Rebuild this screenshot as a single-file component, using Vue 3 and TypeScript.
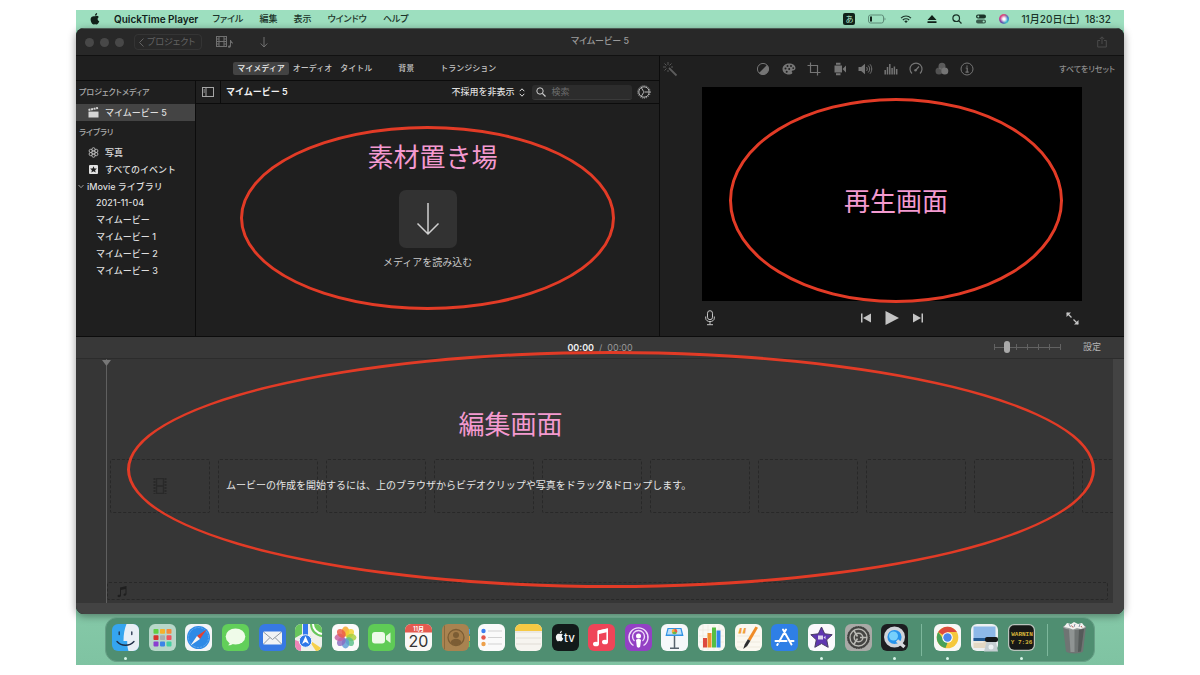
<script setup lang="ts">
import { ref } from 'vue'

interface Tab { name: string; wide?: boolean }
interface DockItem { name: string; art: string; running?: boolean }

const menus: string[] = ['ファイル', '編集', '表示', 'ウインドウ', 'ヘルプ']
const tabs: Tab[] = [
  { name: 'マイメディア' },
  { name: 'オーディオ' },
  { name: 'タイトル' },
  { name: '背景', wide: true },
  { name: 'トランジション' },
]
const activeTab = ref('マイメディア')
const events: string[] = ['2021-11-04', 'マイムービー', 'マイムービー 1', 'マイムービー 2', 'マイムービー 3']
const query = ref('')
const zoomLevel = ref(17)

const adjustments: { name: string; art: string }[] = [
  { name: 'カラーバランス', art: '<circle cx="7" cy="7" r="5.6" fill="none" stroke="currentColor"/><path fill="currentColor" d="M11 3a5.6 5.6 0 0 1-8 8z"/>' },
  { name: '色補正', art: '<path fill="currentColor" fill-rule="evenodd" d="M7 1.5c4 0 6.5 2 6.5 4.6 0 1.6-1 2.4-2.5 2.4-1.4 0-1.5 1-.8 1.7.7 1-.5 2.3-3 2.3C3 12.5.5 10 .5 7S3 1.5 7 1.5zM3.500 5.5a1 1 0 1 0 0 2 1 1 0 0 0 0-2zm2-2.5a1 1 0 1 0 0 2 1 1 0 0 0 0-2zm3.500 0a1 1 0 1 0 0 2 1 1 0 0 0 0-2zM4.700 8.700a1 1 0 1 0 0 2 1 1 0 0 0 0-2zm2.500-2.700a1 1 0 1 0 0 2 1 1 0 0 0 0-2zm4-.8a.9.9 0 1 0 0 1.800.9.9 0 0 0 0-1.800z"/>' },
  { name: 'クロップ', art: '<path fill="none" stroke="currentColor" stroke-width="1.2" d="M3.5.5v10h10M.5 3.5h10v10"/>' },
  { name: '手ぶれ補正', art: '<path fill="currentColor" d="M1.5 3.500h7.500v7H1.500zM9.500 7l3.500-3.500v7zM3 .8h4.500v1.900H3zM3 11.300h4.500v1.900H3z"/>' },
  { name: 'ボリューム', art: '<path fill="currentColor" d="M.5 5h2.600L7 1.800v10.400L3.100 9H.5z"/><path fill="none" stroke="currentColor" d="M8.500 5c1 1 1 3 0 4M10.200 3.500c2 2 2 5 0 7M12 2.300c2.300 2.700 2.300 6.700 0 9.400"/>' },
  { name: 'イコライザ', art: '<path fill="none" stroke="currentColor" stroke-width="1.5" d="M1.2 8v4.500M3.500 5v7.500M5.800 2v10.500M8.100 6v6.500M10.400 4.500v8M12.700 7v5.500"/>' },
  { name: '速度', art: '<path fill="none" stroke="currentColor" stroke-width="1.2" d="M3 11.500A6 6 0 1 1 11 11.500M6.500 8.500L10 4.500"/><circle cx="6.500" cy="8.300" r="1.200" fill="currentColor"/>' },
  { name: 'フィルタ', art: '<circle cx="7" cy="4.300" r="3.500" fill="currentColor" opacity=".7"/><circle cx="4" cy="9" r="3.500" fill="currentColor" opacity=".6"/><circle cx="9.800" cy="9" r="3.500" fill="currentColor"/>' },
  { name: '情報', art: '<circle cx="7" cy="7" r="6" fill="none" stroke="currentColor"/><path fill="none" stroke="currentColor" stroke-width="1.2" d="M5.700 6h1.500v4M5.500 10.200h3.200M7 3.400v1.300"/>' },
]

const petals = ['#f5a623', '#f2d22e', '#a6ce39', '#5bbf8a', '#5b9bd5', '#8a6bc1', '#c55fa0', '#ea5a47']
  .map((c, i) => `<ellipse cx="13.5" cy="7.600" rx="3.700" ry="5" fill="${c}" opacity=".82" transform="rotate(${i * 45} 13.5 13.5)"/>`)
  .join('')
const padColors = ['#5fce45', '#f4b12d', '#f58b3c', '#d8332d', '#a8adb0', '#f0525f', '#8b3fd0', '#3b84e8', '#43cfa0']
const padArt = padColors
  .map((c, i) => `<rect x="${4.5 + (i % 3) * 6.5}" y="${5 + Math.floor(i / 3) * 6.3}" width="5" height="4.800" rx=".8" fill="${c}"/>`)
  .join('')
const tile = (fill: string) => `<rect width="27" height="27" rx="6" fill="${fill}"/>`

const apps: DockItem[] = [
  { name: 'Finder', running: true, art: tile('#35a5ef') + '<path fill="#e9eff6" d="M14.500 0H21a6 6 0 0 1 6 6v15a6 6 0 0 1-6 6h-4.500c-1-3-1.300-6-1.300-10H11.500C11.500 10 12.500 5 14.500 0z"/><path d="M7.200 8v2.600M19.800 8v2.600M5 17.500c4.500 5 12.500 5 17 0" fill="none" stroke="#1d2c45" stroke-width="1.300" stroke-linecap="round"/>' },
  { name: 'Launchpad', art: tile('#b7d7c9') + padArt },
  { name: 'Safari', art: tile('#f3f5f6') + '<circle cx="13.500" cy="13.500" r="11.500" fill="#2e8ae6"/><circle cx="13.500" cy="13.500" r="10" fill="none" stroke="#9bccf7" stroke-width="1" stroke-dasharray=".5 1"/><path fill="#e6402f" d="M21.500 5.500l-6.500 9.500-3-3z"/><path fill="#f6f6f6" d="M5.500 21.500l6.500-9.500 3 3z"/>' },
  { name: 'メッセージ', art: tile('#62cf5a') + '<ellipse cx="13.500" cy="12.500" rx="9.800" ry="8" fill="#effbe9"/><path fill="#effbe9" d="M8 17c.2 2-.7 3.500-2 4.300 2.500.2 4.500-.8 5.500-2.300z"/>' },
  { name: 'メール', art: tile('#3779e4') + '<rect x="4" y="7.500" width="19" height="13" rx="1.500" fill="#f1f3f5"/><path fill="none" stroke="#9199a2" d="M4.500 8l9 7.500 9-7.500M4.500 20l6.500-6.500M22.500 20L16 13.500"/>' },
  { name: 'マップ', art: tile('#eff0eb') + '<path fill="#68c65c" d="M15 0h6a6 6 0 0 1 6 6v7C20 12 15 7 15 0zM0 6a6 6 0 0 1 6-6h1v10L0 14z"/><path fill="#3478ed" d="M8 0h5v13H8z"/><path fill="none" stroke="#fff" stroke-width="2" d="M18 0c0 5 4 9 9 10"/><path fill="#ef86b8" d="M0 16l6 2v9a6 6 0 0 1-6-6z"/><path fill="#f5d04b" d="M13 15l13 9c-1 2-3 3-5 3z"/><circle cx="10.500" cy="17" r="6.300" fill="#2f78e8" stroke="#f4f7fa"/><path fill="#fff" d="M10.500 12l3.500 8-3.500-2-3.500 2z"/>' },
  { name: '写真', art: tile('#fbfbfa') + petals },
  { name: 'FaceTime', art: tile('#5fcb56') + '<rect x="4" y="8" width="13" height="11.500" rx="3" fill="#eefaea"/><path fill="#e4f6e0" d="M18 12l4.500-3.500v10.500L18 15.500z"/>' },
  { name: 'カレンダー', art: tile('#f9f8f6') + '<path fill="#e45a4f" d="M0 8.500V6a6 6 0 0 1 6-6h15a6 6 0 0 1 6 6v2.500z"/><text x="13.500" y="6.500" font-size="6" font-weight="600" text-anchor="middle" fill="#fff">11月</text><text x="13.500" y="22.500" font-size="16" text-anchor="middle" fill="#333">20</text>' },
  { name: '連絡先', art: '<path fill="#4b9be0" d="M24 5h4v5h-4z"/><path fill="#e8a33b" d="M24 12h4v5h-4z"/><path fill="#58c06a" d="M24 18h4v5h-4z"/>' + tile('#a98350') + '<path stroke="#8a6a3d" d="M2.500 1.500v24"/><circle cx="14" cy="13.500" r="8" fill="#a47d4a" stroke="#7c5d34" stroke-width="1.300"/><circle cx="14" cy="11" r="3" fill="#7c5d34"/><path fill="#7c5d34" d="M8.500 18.500c1-5 10-5 11 0-3 3.500-8 3.500-11 0z"/>' },
  { name: 'リマインダー', art: tile('#fafafa') + '<circle cx="5.500" cy="7" r="2.200" fill="#3c7ff0"/><circle cx="5.500" cy="13.500" r="2.200" fill="#e4564b"/><circle cx="5.500" cy="20" r="2.200" fill="#eda04a"/><path stroke="#c8c8c8" stroke-width=".8" d="M10 7h14M10 13.500h14M10 20h14"/>' },
  { name: 'メモ', art: tile('#f6f4ef') + '<path fill="#f6c944" d="M0 7V6a6 6 0 0 1 6-6h15a6 6 0 0 1 6 6v1z"/><path stroke="#c9c5bb" stroke-width=".5" d="M0 8h27M1 14h25M1 20h25"/>' },
  { name: 'TV', art: tile('#121a1a') + '<path fill="#f4f4f4" d="M8 10c.8-.4 2-.5 2.800.4-1.600 1.300-1.200 3.200.5 4-.7 1.800-1.800 3.400-3.200 2.800-.6-.2-1-.2-1.600 0C4.700 17.900 2.500 12.300 5 10.400c1-.8 2-.5 3-.4zm-.2-.7c0-1.300.8-2.200 2-2.500.1 1.300-.7 2.400-2 2.500z"/><text x="12" y="17.500" font-size="11.500" font-weight="500" fill="#f4f4f4">tv</text>' },
  { name: 'ミュージック', art: tile('#ef4558') + '<path fill="none" stroke="#fff" stroke-width="1.600" d="M10.200 20V7.500l9-2V18"/><path fill="#fff" d="M10 6.500l9.800-2.200V8L10 10.200z"/><ellipse cx="8" cy="20" rx="3" ry="2.300" fill="#fff"/><ellipse cx="17" cy="18" rx="3" ry="2.300" fill="#fff"/>' },
  { name: 'ポッドキャスト', art: tile('#9340c4') + '<g fill="none" stroke="#f0dcfa" stroke-width="1.400"><path d="M8.500 21.500a9.500 9.500 0 1 1 10 0"/><path d="M9.500 17a6 6 0 1 1 8 0"/></g><circle cx="13.500" cy="12" r="2.500" fill="#fff"/><path fill="#fff" d="M11 16c1-1.200 4-1.200 5 0l-.8 6.500c-.4 1.500-3 1.500-3.400 0z"/>' },
  { name: 'Keynote', art: tile('#f6f8fa') + '<path fill="#2f93e4" d="M6.500 4h14l2 8h-18z"/><path fill="#bfe0f8" d="M7.500 5h12l1.300 5.500H6z"/><circle cx="13.500" cy="7.500" r="2.700" fill="#f2b13c"/><path fill="#ed5b49" d="M13.500 7.500V4.800a2.700 2.700 0 0 1 2.400 4z"/><path fill="#57b955" d="M13.500 7.500l2.400 1.300a2.700 2.700 0 0 1-4.800 0z"/><path stroke="#59636e" stroke-width="1.500" d="M13.500 12v12M9 24.300h9"/>' },
  { name: 'Numbers', art: tile('#faf9f4') + '<path stroke="#e5e2d7" stroke-width=".5" d="M5 1v25M10 1v25M16 1v25M21 1v25M1 6h25M1 12h25M1 18h25"/><path fill="#dd4a40" d="M5 14h4v9.500H5z"/><path fill="#f0912f" d="M9.500 9h4v14.500h-4z"/><path fill="#55bf45" d="M14 3.500h4v20h-4z"/><path fill="#2f86e8" d="M18.500 6.500h4v17h-4z"/>' },
  { name: 'Pages', art: tile('#fbf8f0') + '<path stroke="#e7e1d4" stroke-width=".6" d="M2 12h23M2 18h23M2 23h23"/><text x="2" y="17" font-size="18" font-weight="700" fill="#f0a13c">“</text><path fill="#f08c28" d="M20.500 2.500l2.500 1.300-7.500 13-2.700-1.500z"/><path fill="#2d2d30" d="M12.800 15.300l2.700 1.500-3.300 5.200-4 3 1.500-4.500z"/>' },
  { name: 'App Store', art: tile('#2f7fe6') + '<g fill="none" stroke="#fff" stroke-width="2" stroke-linecap="round"><path d="M15 5.500L8.200 17.500M12 5.500l8.500 15M4.500 17h11M19.800 17h2.700M6.800 20l-.6 1"/></g>' },
  { name: 'iMovie', running: true, art: tile('#faf9fc') + '<path fill="#5e35b1" stroke="#493c63" stroke-linejoin="round" d="M13.500 3l3.200 6.800 7.500.9-5.500 5.100 1.500 7.500-6.700-3.700-6.700 3.700 1.500-7.500-5.500-5.100 7.500-.9z"/><path fill="#ddd5ee" d="M10 11.500h5v4h-5zM15.500 13.500l2-1.700v3.500z"/>' },
  { name: 'システム環境設定', art: tile('#a9a9a6') + '<circle cx="13.500" cy="13.500" r="11" fill="#454543" stroke="#2d2d2b" stroke-dasharray="1 .7"/><circle cx="13.500" cy="13.500" r="8.500" fill="none" stroke="#b9b9b4" stroke-width="1.300"/><circle cx="13.500" cy="13.500" r="4.300" fill="none" stroke="#b9b9b4" stroke-width="1.500"/><path stroke="#b9b9b4" stroke-width="1.600" d="M15 13.500h7M12.500 14.500l-4 6.500M12.500 12.500l-4-6.500"/>' },
  { name: 'QuickTime Player', running: true, art: tile('#1c1d20') + '<circle cx="13.500" cy="13" r="8.800" fill="#2793eb" stroke="#cfd3d9" stroke-width="3.400"/><circle cx="12.500" cy="12" r="4.500" fill="#76d0fb"/><path stroke="#d6d9de" stroke-width="3.500" d="M16 16.500l7.500 6.500"/>' },
]

const recents: DockItem[] = [
  { name: 'Google Chrome', running: true, art: tile('#f7f7f6') + '<circle cx="13.500" cy="13.500" r="10.800" fill="#f5c83d"/><path fill="#dd4b3e" d="M13.500 13.500L4.200 8.100a10.800 10.800 0 0 1 18.700 0h-9.400z"/><path fill="#47a159" d="M4.200 8.100l6 8.200 3.300 2.500-2 5.300A10.800 10.800 0 0 1 4.200 8.100z"/><circle cx="13.500" cy="13.500" r="5.300" fill="#fff"/><circle cx="13.500" cy="13.500" r="4.200" fill="#4a86ea"/>' },
  { name: 'プレビュー', art: tile('#edf0f2') + '<path fill="#8db8e8" d="M2.500 2.500h22v14h-22z"/><path fill="#245a93" d="M2.500 14h22v3h-22z"/><path fill="#e4d8c4" d="M2.500 17h22v7h-22z"/><path stroke="#f6f6f6" d="M2.500 18h10"/><rect x="14" y="13" width="13" height="5" rx="2" fill="#16181b"/><path fill="#c5ced2" d="M15.500 18h9.500l2 9.500H13z"/><circle cx="20" cy="23" r="2.500" fill="#eef3f5"/>' },
  { name: 'コンソール', running: true, art: tile('#b9c4bd') + '<rect x="1.200" y="1.200" width="24.600" height="24.600" rx="5" fill="#171817"/><text x="14" y="12" font-size="6" font-weight="600" font-family="Liberation Mono" text-anchor="middle" fill="#d7b63c">WARNIN</text><text x="13.500" y="19.500" font-size="6" font-weight="600" font-family="Liberation Mono" text-anchor="middle" fill="#d7b63c">Y 7:36</text>' },
]
const trash: DockItem = {
  name: 'ゴミ箱',
  art: '<path fill="#6f7473" d="M2 2.500h23l-3 25c-2 2.500-15 2.500-17 0z"/><path fill="#8f9493" d="M8 5l1.500 23h4L13.500 5z"/><path fill="#555a59" d="M18 5l-1 23 3-.5L23 5z"/><ellipse cx="13.500" cy="3" rx="11.500" ry="2.800" fill="#9ba3a1"/><path fill="#f2f2f0" d="M3 3l3-4 4 1 3-2 4 2 4-1 3 4-4 2-4-1-4 1.500L8 4z"/><path stroke="#6a7c90" stroke-width=".8" d="M8 0l1.500 3M14 0l-1 3M19 0l-1 3"/><path stroke="#b3574f" d="M10.500 1.500l1.500 2M20 2l1 1.500"/>',
}
</script>

<template>
  <main class="page" lang="ja">
    <div class="desktop">
      <header class="menubar">
        <nav class="menus">
          <svg class="apple" viewBox="0 0 11 13" width="10" height="12" aria-label="Apple"><path fill="#12211a" d="M5.700 3.500c1-.6 2.800-.9 4 .7-2 1.300-1.700 4 .5 4.900-.8 2.200-2.200 4-3.600 3.400-.8-.3-1.200-.3-2 0C2.200 13.400-1 6.500 1.700 4.200c1.400-1.200 2.700-.8 4-.7zm-.3-.5C5.300 1.500 6.300.3 7.800 0 8 1.600 6.900 3 5.400 3z" /></svg>
          <strong>QuickTime Player</strong>
          <a v-for="m in menus" :key="m" href="#">{{ m }}</a>
        </nav>
        <div class="status">
          <span class="ime">あ</span>
          <svg width="18" height="10" viewBox="0 0 18 10"><rect x=".5" y="1" width="15" height="8" rx="2" fill="none" stroke="#5f8d79" /><path fill="#12211a" d="M2 2.500h2v5H2z" /><path fill="#5f8d79" d="M16.500 3.500c1.300.5 1.300 2.500 0 3z" /></svg>
          <svg width="12" height="10" viewBox="0 0 14 10"><g fill="none" stroke="#1b3328" stroke-width="1.400"><path d="M1.200 4C4.500.7 9.500.7 12.800 4M3.300 6.200c2-2 5.400-2 7.400 0" /></g><path fill="#1b3328" d="M5 7.600c1-1 3-1 4 0L7 9.700z" /></svg>
          <svg width="12" height="10" viewBox="0 0 12 10"><path fill="#12211a" d="M6 1l4.500 5h-9zM1.500 7.300h9V9h-9z" /></svg>
          <svg width="10" height="10" viewBox="0 0 10 10"><circle cx="4.200" cy="4.200" r="3.300" fill="none" stroke="#1b3328" stroke-width="1.200" /><path stroke="#1b3328" stroke-width="1.300" d="M6.600 6.600L9.500 9.500" /></svg>
          <svg width="10" height="10" viewBox="0 0 10 10"><rect x="0" y=".5" width="10" height="4" rx="2" fill="#1b3328" /><circle cx="2.300" cy="2.500" r="1" fill="#9ddfbf" /><rect x="0" y="5.500" width="10" height="4" rx="2" fill="#3b5c4d" /><circle cx="7.700" cy="7.500" r="1.100" fill="#9ddfbf" /></svg>
          <span class="siri"></span>
          <time>11月20日(土)&nbsp; 18:32</time>
        </div>
      </header>

      <section class="window">
        <header class="titlebar">
          <div class="tools">
            <i class="light"></i><i class="light"></i><i class="light"></i>
            <button class="back" type="button">
              <svg width="5" height="9" viewBox="0 0 5 9"><path d="M4.500.5l-4 4 4 4" fill="none" stroke="currentColor" /></svg>プロジェクト
            </button>
            <button class="plain" type="button" aria-label="メディアとミュージック">
              <svg width="18" height="14" viewBox="0 0 18 14"><g fill="none" stroke="currentColor"><rect x=".5" y="1.500" width="10" height="10" /><path d="M3 1.500v10M8 1.500v10M3 6.500h5M.5 4h2.500M.5 6.500h2.500M.5 9h2.500M8 4h2.500M8 6.500h2.500M8 9h2.500" /></g><path fill="currentColor" d="M14 5h1c0 1.500 2.500 2 2 4.500-.3-1.200-1-1.500-2-1.700V11c0 2-3 2.500-3 .8 0-1 1-1.500 2-1.300z" /></svg>
            </button>
            <button class="plain down" type="button" aria-label="読み込む">
              <svg width="8" height="11" viewBox="0 0 8 11"><path d="M4 0v10M.7 6.500L4 10l3.300-3.500" fill="none" stroke="currentColor" /></svg>
            </button>
          </div>
          <h1>マイムービー 5</h1>
          <button class="plain share" type="button" aria-label="共有">
            <svg width="10" height="12" viewBox="0 0 10 12"><path d="M3 4.500H.7v6.500h8.600V4.500H7M5 8V1M2.800 3L5 .8 7.200 3" fill="none" stroke="currentColor" /></svg>
          </button>
        </header>

        <div class="upper">
          <section class="library">
            <nav class="tabs">
              <button v-for="t in tabs" :key="t.name" type="button" :class="{ active: t.name === activeTab, wide: t.wide }" @click="activeTab = t.name">{{ t.name }}</button>
            </nav>
            <div class="library-body">
              <aside class="sidebar">
                <h2>プロジェクトメディア</h2>
                <a class="row selected" href="#">
                  <svg width="11" height="11" viewBox="0 0 11 11"><path fill="#d6d6d6" d="M.5 5h10v5.500H.5z" /><path stroke="#d6d6d6" stroke-width="2" stroke-dasharray="2 .6" d="M.5 3L10 .9" /><path fill="#bdbdbd" d="M.5 3.900h10v.7H.5z" /></svg>マイムービー 5
                </a>
                <h2>ライブラリ</h2>
                <a class="row" href="#">
                  <svg width="11" height="11" viewBox="0 0 11 11"><g fill="none" stroke="#bdbdbd" stroke-width=".9"><circle cx="5.500" cy="5.500" r="1.500" /><circle cx="5.500" cy="2.300" r="1.600" /><circle cx="5.500" cy="8.700" r="1.600" /><circle cx="2.700" cy="3.900" r="1.600" /><circle cx="8.300" cy="3.900" r="1.600" /><circle cx="2.700" cy="7.100" r="1.600" /><circle cx="8.300" cy="7.100" r="1.600" /></g></svg>写真
                </a>
                <a class="row" href="#">
                  <svg width="11" height="11" viewBox="0 0 11 11"><rect x="1" y="1" width="9" height="9" rx="1" fill="#e2e2e2" /><path fill="#1f1f1f" d="M5.500 2.200l1 2.200 2.400.2-1.800 1.600.6 2.400-2.200-1.300-2.200 1.300.6-2.400L2.100 4.600l2.400-.2z" /></svg>すべてのイベント
                </a>
                <a class="row group" href="#">
                  <svg width="6" height="5" viewBox="0 0 6 5"><path d="M.5 1L3 3.700 5.500 1" fill="none" stroke="#9a9a9a" /></svg>iMovie ライブラリ
                </a>
                <a v-for="e in events" :key="e" class="row leaf" href="#">{{ e }}</a>
              </aside>

              <div class="browser">
                <header class="browser-head">
                  <button class="toggle" type="button" aria-label="サイドバー">
                    <svg width="12" height="10" viewBox="0 0 12 10"><g fill="none" stroke="currentColor"><rect x=".5" y=".5" width="11" height="9" /><path d="M4 .5v9M1.500 3h1.500M1.500 5h1.500" /></g></svg>
                  </button>
                  <strong>マイムービー 5</strong>
                  <button class="filter" type="button">不採用を非表示
                    <svg width="6" height="9" viewBox="0 0 6 9"><path d="M.7 3.200L3 .8l2.300 2.400M.7 5.800L3 8.200l2.300-2.400" fill="none" stroke="currentColor" /></svg>
                  </button>
                  <label class="search">
                    <svg width="10" height="10" viewBox="0 0 10 10"><circle cx="4" cy="4" r="3.200" fill="none" stroke="#cfcfcf" /><path stroke="#cfcfcf" stroke-width="1.200" d="M6.400 6.400L9.500 9.500" /></svg>
                    <input v-model="query" type="text" placeholder="検索" aria-label="検索" />
                  </label>
                  <button class="plain gear" type="button" aria-label="設定">
                    <svg width="14" height="14" viewBox="0 0 14 14"><g fill="none" stroke="currentColor"><circle cx="7" cy="7" r="5.200" /><circle cx="7" cy="7" r="6.200" stroke-dasharray="1 1.160" /><path d="M7.500 7H12M6.800 7.200L4.500 11M6.800 6.800L4.500 3" /></g></svg>
                  </button>
                </header>
                <div class="media">
                  <button class="import" type="button">
                    <span class="import-box">
                      <svg width="24" height="34" viewBox="0 0 24 34"><path d="M12 1v31M1.500 21.500L12 32l10.500-10.500" fill="none" stroke="#d0d0d0" stroke-width="1.500" /></svg>
                    </span>
                    メディアを読み込む
                  </button>
                  <div class="ring ring-media"></div>
                  <p class="note note-media">素材置き場</p>
                </div>
              </div>
            </div>
          </section>

          <section class="viewer">
            <header class="viewer-head">
              <button class="plain wand" type="button" aria-label="自動補正">
                <svg width="14" height="14" viewBox="0 0 14 14"><path stroke="currentColor" stroke-width="1.800" d="M6 6l7.500 7.500" /><path stroke="currentColor" stroke-width=".9" d="M5 0v3M0 5h3M1.500 1.500l2 2M8.500 1.500l-2 2M1.500 8.500l2-2M10 5H8M5 8v2" /></svg>
              </button>
              <div class="adjust">
                <button v-for="a in adjustments" :key="a.name" class="plain" type="button" :aria-label="a.name">
                  <svg width="14" height="14" viewBox="0 0 14 14" v-html="a.art"></svg>
                </button>
              </div>
              <button class="plain reset" type="button">すべてをリセット</button>
            </header>
            <div class="video">
              <div class="ring ring-video"><p class="note">再生画面</p></div>
            </div>
            <footer class="transport">
              <button class="plain" type="button" aria-label="アフレコ">
                <svg width="10" height="16" viewBox="0 0 10 16"><g fill="none" stroke="currentColor"><rect x="2.500" y=".7" width="5" height="9" rx="2.500" /><path d="M.7 6.500v1.700c0 4.500 8.600 4.500 8.600 0V6.500M5 11.500v3M2 14.700h6" /></g></svg>
              </button>
              <div class="play">
                <button class="plain" type="button" aria-label="前へ"><svg width="10" height="10" viewBox="0 0 10 10"><path fill="currentColor" d="M0 .5h1.500v9H0zM10 .5v9L2 5z" /></svg></button>
                <button class="plain" type="button" aria-label="再生"><svg width="14" height="14" viewBox="0 0 14 14"><path fill="currentColor" d="M.5 0L14 7 .5 14z" /></svg></button>
                <button class="plain" type="button" aria-label="次へ"><svg width="10" height="10" viewBox="0 0 10 10"><path fill="currentColor" d="M8.500.5H10v9H8.500zM0 .5v9L8 5z" /></svg></button>
              </div>
              <button class="plain" type="button" aria-label="フルスクリーン">
                <svg width="13" height="13" viewBox="0 0 13 13"><path fill="currentColor" d="M.5.5h4.500L.5 5zM12.500 12.500H8l4.500-4.500z" /><path fill="none" stroke="currentColor" stroke-width="1.300" d="M1 1l4.500 4.500M12 12L7.500 7.500" /></svg>
              </button>
            </footer>
          </section>
        </div>

        <section class="timeline">
          <header class="timeline-head">
            <p class="clock"><b>00:00</b><span>/</span><span>00:00</span></p>
            <div class="timeline-tools">
              <input v-model.number="zoomLevel" type="range" min="0" max="100" aria-label="クリップのサイズ" />
              <button class="plain" type="button">設定</button>
            </div>
          </header>
          <div class="track-area">
            <div class="gutter"><svg class="playhead" width="9" height="6" viewBox="0 0 9 6"><path fill="#777" d="M0 0h9L4.500 6z" /></svg></div>
            <div class="tracks">
              <div class="clips">
                <div v-for="n in 10" :key="n" class="clip">
                  <svg v-if="n === 1" width="14" height="16" viewBox="0 0 14 16"><g fill="none" stroke="#292929" stroke-width="1.300"><path d="M3.500.7h7v14.600h-7zM3.500 8h7" /></g><path stroke="#292929" stroke-width="2" stroke-dasharray="2 1" d="M1.500 0v16M12.500 0v16" /></svg>
                </div>
                <p class="hint">ムービーの作成を開始するには、上のブラウザからビデオクリップや写真をドラッグ&amp;ドロップします。</p>
              </div>
              <div class="audio">
                <svg width="10" height="11" viewBox="0 0 10 11"><path fill="#1f1f1f" d="M3 1.500L9.500 0v8c0 2-3 2.500-3 .8 0-1 1-1.500 2-1.300V3L4 4v5.500c0 2-3.500 2.200-3.500.5 0-1 1.200-1.500 2.500-1.200z" /></svg>
              </div>
            </div>
          </div>
          <div class="ring ring-timeline"></div>
          <p class="note note-timeline">編集画面</p>
        </section>
      </section>

      <nav class="dock">
        <button v-for="a in apps" :key="a.name" type="button" :class="{ running: a.running }" :aria-label="a.name"><svg viewBox="0 0 27 27" v-html="a.art"></svg></button>
        <i class="divider"></i>
        <button v-for="a in recents" :key="a.name" type="button" :class="{ running: a.running }" :aria-label="a.name"><svg viewBox="0 0 27 27" v-html="a.art"></svg></button>
        <i class="divider"></i>
        <button type="button" :aria-label="trash.name"><svg viewBox="0 0 27 27" v-html="trash.art"></svg></button>
      </nav>
    </div>
  </main>
</template>

<style>
body {
  margin: 0;
  background: #fff;
}
</style>

<style scoped>
* {
  box-sizing: border-box;
}
.page {
  min-height: 100vh;
  padding: 10px 76px;
  display: flex;
  font-family: Inter, "Noto Sans CJK JP", sans-serif;
  font-size: 9px;
  line-height: 12px;
  color: #dedede;
}
h1, h2, p {
  margin: 0;
  font-size: 9px;
  font-weight: 400;
}
svg {
  display: block;
  flex: none;
  overflow: visible;
}
a {
  color: inherit;
  text-decoration: none;
}
button {
  padding: 0;
  border: 0;
  background: none;
  color: inherit;
  font: inherit;
  white-space: nowrap;
}
.desktop {
  flex: 1;
  min-width: 0;
  display: flex;
  flex-direction: column;
  background: linear-gradient(#9ddfbf 0 60%, #7fc3a2);
}
.menubar {
  height: 18px;
  padding: 0 13px;
  display: flex;
  justify-content: space-between;
  align-items: center;
  color: #1b3328;
}
.menus, .status {
  display: flex;
  align-items: center;
}
.menus {
  gap: 16px;
  font-weight: 500;
  font-feature-settings: "palt";
}
.apple {
  margin: 0 -2px 0 1px;
}
.menus strong {
  margin-right: -2px;
  font-size: 10px;
  font-weight: 600;
  color: #12211a;
}
.status {
  gap: 14px;
}
.status time {
  font-size: 10px;
  font-weight: 500;
}
.ime {
  width: 12px;
  height: 12px;
  margin-right: -1px;
  border-radius: 2px;
  background: #10231a;
  color: #b6e8d0;
  font-size: 8px;
  text-align: center;
}
.siri {
  width: 10px;
  height: 10px;
  margin: 0 -2px 0 -1px;
  border-radius: 50%;
  background: radial-gradient(circle, #fff 15%, transparent 55%), conic-gradient(#d8507b, #3b7fd0, #3cc0c8, #6b4bb0, #d23f8c, #d8507b);
}
.window {
  flex: 1;
  display: flex;
  flex-direction: column;
  border-radius: 8px;
  overflow: hidden;
  background: #1f1f1f;
  box-shadow: 0 2px 8px #00000066;
}
.titlebar {
  height: 28px;
  padding: 0 9px;
  display: grid;
  grid-template-columns: 1fr auto 1fr;
  align-items: center;
  background: #282828;
  border-top: 1px solid #4b5a53;
  border-bottom: 1px solid #111;
  color: #707070;
}
.titlebar h1 {
  padding-bottom: 3px;
  font-weight: 500;
  font-feature-settings: "palt";
  color: #9a9a9a;
}
.tools {
  display: flex;
  align-items: center;
  gap: 6px;
}
.light {
  width: 9px;
  height: 9px;
  border-radius: 50%;
  background: #484848;
}
.back {
  height: 16px;
  margin: 0 8px 0 4px;
  padding: 0 6px 0 4px;
  display: flex;
  align-items: center;
  gap: 3px;
  border: 1px solid #343434;
  border-radius: 4px;
  font-feature-settings: "palt";
  color: #626262;
}
.down {
  margin-left: 20px;
}
.share {
  justify-self: end;
  margin-right: 8px;
  color: #4b4b4b;
}
.upper {
  display: flex;
  border-bottom: 1px solid #0c0c0c;
}
.library {
  flex: 584;
  min-width: 0;
  display: flex;
  flex-direction: column;
  border-right: 1px solid #0c0c0c;
}
.tabs {
  height: 25px;
  padding-right: 2px;
  display: flex;
  justify-content: center;
  align-items: center;
  border-bottom: 1px solid #0c0c0c;
  font-size: 8px;
  font-weight: 500;
  color: #c6c6c6;
}
.tabs button {
  height: 13px;
  padding: 0 4px;
  border-radius: 2px;
}
.tabs .wide {
  padding: 0 22px;
}
.tabs .active {
  background: #434343;
  color: #f2f2f2;
}
.library-body {
  flex: 1;
  display: flex;
}
.sidebar {
  width: 120px;
  border-right: 1px solid #0c0c0c;
  font-weight: 500;
}
.sidebar h2 {
  height: 23px;
  padding: 0 0 2px 3px;
  display: flex;
  align-items: center;
  font-size: 8px;
  font-weight: 500;
  font-feature-settings: "palt";
  color: #adadad;
}
.row {
  height: 17px;
  padding: 0 0 0 12px;
  display: flex;
  align-items: center;
  gap: 6px;
  white-space: nowrap;
}
.selected {
  background: #444;
}
.group {
  padding-left: 2px;
  gap: 3px;
}
.leaf {
  padding: 0 0 1px 20px;
}
.browser {
  flex: 1;
  min-width: 0;
  display: flex;
  flex-direction: column;
}
.browser-head {
  height: 23px;
  padding-right: 8px;
  display: flex;
  align-items: center;
  border-bottom: 1px solid #0c0c0c;
}
.browser-head strong {
  font-weight: 600;
  color: #f0f0f0;
}
.toggle {
  width: 25px;
  height: 22px;
  margin-right: 5px;
  display: flex;
  align-items: center;
  justify-content: center;
  border-right: 1px solid #0c0c0c;
  color: #a6a6a6;
}
.filter {
  margin-left: auto;
  display: flex;
  align-items: center;
  gap: 5px;
  font-weight: 500;
}
.search {
  width: 100px;
  height: 15px;
  margin: 0 5px 0 7px;
  padding: 0 4px;
  display: flex;
  align-items: center;
  gap: 5px;
  border-radius: 3px;
  background: #2c2c2c;
  border-bottom: 1px solid #3a3a3a;
}
.search input {
  width: 100%;
  min-width: 0;
  padding: 0;
  border: 0;
  outline: 0;
  background: none;
  color: #ddd;
  font: inherit;
}
.search input::placeholder {
  color: #6c6c6c;
}
.gear {
  color: #b8b8b8;
}
.media {
  position: relative;
  flex: 1;
  padding-top: 18px;
  display: flex;
  align-items: center;
  justify-content: center;
}
.import {
  display: flex;
  flex-direction: column;
  align-items: center;
  gap: 8px;
  font-size: 10px;
  color: #c8c8c8;
}
.import-box {
  width: 58px;
  height: 58px;
  display: flex;
  align-items: center;
  justify-content: center;
  border-radius: 7px;
  background: #323232;
}
.ring {
  position: absolute;
  border: 3px solid #e23b26;
  border-radius: 50%;
  pointer-events: none;
}
.note {
  font-size: 26px;
  line-height: 34px;
  color: #f49ad0;
  white-space: nowrap;
}
.ring-media {
  top: 22px;
  left: 9.5%;
  width: 81%;
  height: 184px;
}
.note-media {
  position: absolute;
  top: 37px;
  left: 37%;
}
.viewer {
  flex: 464;
  min-width: 0;
  display: flex;
  flex-direction: column;
}
.viewer-head {
  height: 31px;
  padding: 0 9px 5px 3px;
  display: flex;
  align-items: center;
  color: #757575;
}
.wand {
  color: #5c5c5c;
}
.adjust {
  width: 218px;
  margin: 0 auto;
  padding-right: 2px;
  box-sizing: content-box;
  display: flex;
  justify-content: space-between;
}
.reset {
  padding-left: 4px;
  font-size: 8px;
  font-weight: 500;
  font-feature-settings: "palt";
  color: #8d8d8d;
}
.video {
  position: relative;
  margin: 0 42px;
  aspect-ratio: 16 / 9;
  background: #000;
}
.ring-video {
  top: 5%;
  left: 7%;
  width: 88%;
  height: 96%;
  padding-top: 3px;
  display: flex;
  align-items: center;
  justify-content: center;
}
.transport {
  height: 35px;
  padding: 0 45px;
  display: grid;
  grid-template-columns: 1fr auto 1fr;
  align-items: center;
  color: #c4c4c4;
}
.transport > :last-child {
  justify-self: end;
}
.transport > :first-child {
  justify-self: start;
}
.play {
  display: flex;
  align-items: center;
  gap: 14px;
}
.timeline {
  position: relative;
  flex: 1;
  display: flex;
  flex-direction: column;
  background: #363636;
}
.timeline-head {
  position: relative;
  height: 22px;
  padding-right: 23px;
  display: flex;
  align-items: center;
  justify-content: flex-end;
  background: #383838;
  border-bottom: 1px solid #2c2c2c;
}
.clock {
  position: absolute;
  inset: 5px 0 auto;
  display: flex;
  justify-content: center;
  gap: 5px;
  color: #9a9a9a;
}
.clock b {
  font-weight: 600;
  color: #f2f2f2;
}
.timeline-tools {
  display: flex;
  align-items: center;
  gap: 22px;
  color: #b5b5b5;
}
.timeline-tools input {
  appearance: none;
  width: 67px;
  height: 13px;
  margin: 0;
  background:
    linear-gradient(#626262, #626262) center / 100% 1px no-repeat,
    repeating-linear-gradient(90deg, #626262 0 1px, transparent 1px 11px) center / 100% 6px no-repeat;
}
.timeline-tools input::-webkit-slider-thumb {
  appearance: none;
  width: 6px;
  height: 12px;
  border-radius: 3px;
  background: #a9a9a9;
}
.track-area {
  flex: 1;
  display: flex;
  border-right: 11px solid #434343;
  border-bottom: 11px solid #434343;
}
.gutter {
  position: relative;
  width: 31px;
  border-right: 1px solid #606060;
}
.playhead {
  position: absolute;
  top: 1px;
  right: -5px;
}
.tracks {
  flex: 1;
  min-width: 0;
  display: flex;
  flex-direction: column;
  justify-content: flex-end;
}
.clips {
  position: relative;
  margin: 0 0 69px 3px;
  display: flex;
  gap: 8px;
  overflow: hidden;
}
.clip {
  flex: 0 0 100px;
  height: 54px;
  display: flex;
  align-items: center;
  justify-content: center;
  border: 1px dashed #282828;
  border-radius: 2px;
}
.hint {
  position: absolute;
  top: 20px;
  left: 116px;
  font-size: 10px;
  color: #e6e6e6;
  white-space: nowrap;
}
.audio {
  height: 18px;
  margin: 0 5px 3px 0;
  padding-left: 9px;
  display: flex;
  align-items: center;
  border: 1px dashed #282828;
  border-radius: 2px;
}
.ring-timeline {
  top: 14px;
  left: 4.9%;
  width: 92.3%;
  height: 237px;
}
.note-timeline {
  position: absolute;
  top: 71px;
  left: 36.5%;
}
.dock {
  margin: 3px 29px;
  height: 45px;
  padding: 6px 6px 0;
  display: flex;
  align-items: flex-start;
  justify-content: space-between;
  border: 1px solid #679f86;
  border-radius: 12px;
  background: #4f8e71;
}
.dock button {
  position: relative;
  width: 27px;
  height: 27px;
}
.dock button svg {
  width: 27px;
  height: 27px;
}
.running::after {
  content: "";
  position: absolute;
  left: 12px;
  bottom: -9px;
  width: 3px;
  height: 3px;
  border-radius: 50%;
  background: #d8f5e8;
}
.divider {
  width: 1px;
  height: 32px;
  margin: 0 3px;
  background: #7db79c;
}
</style>
